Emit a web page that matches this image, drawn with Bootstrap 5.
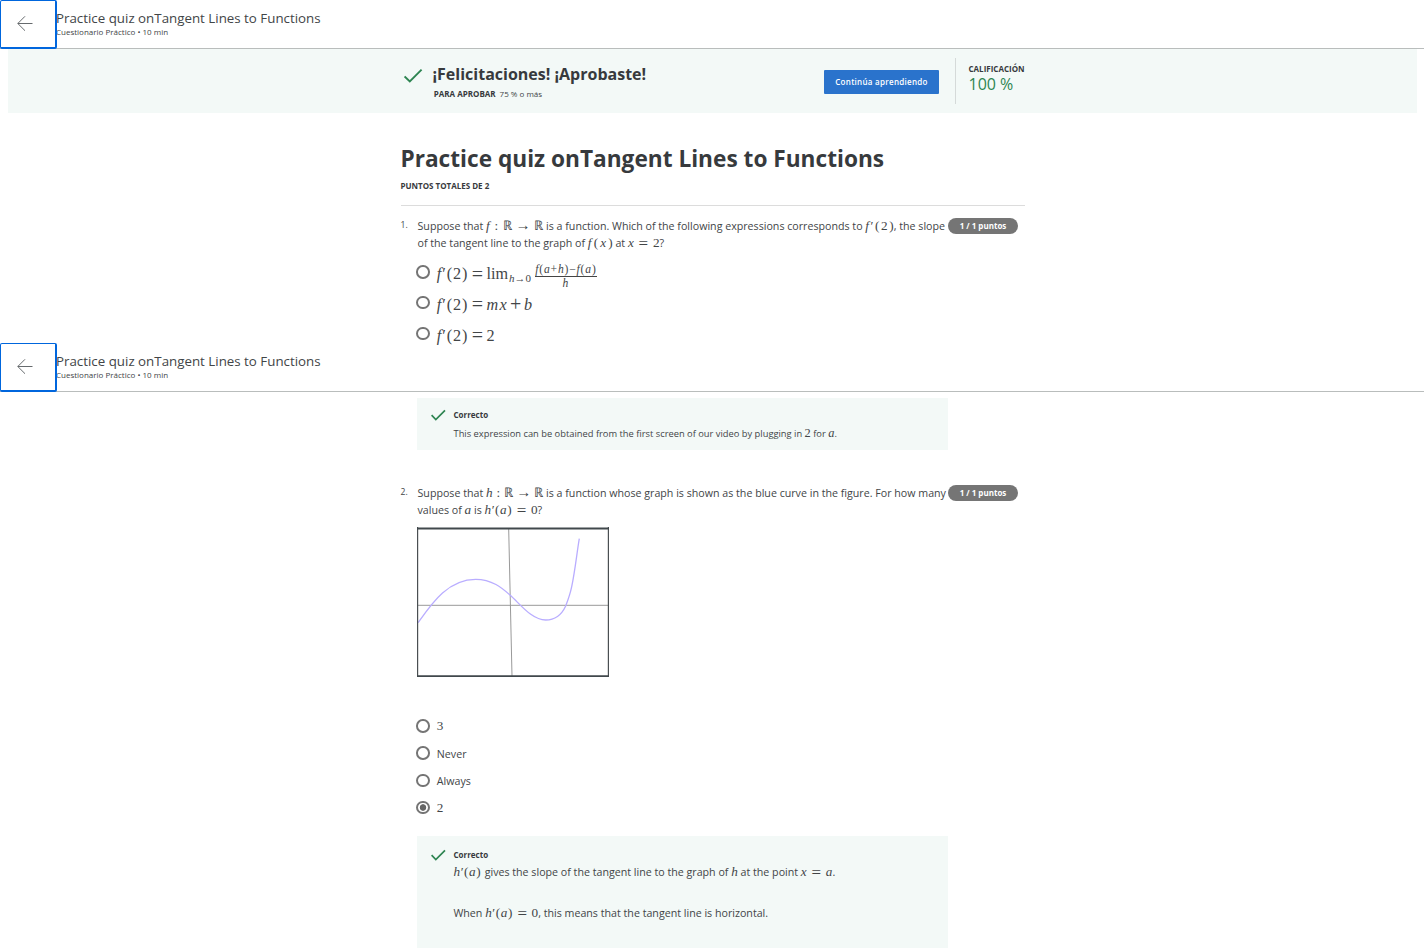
<!DOCTYPE html>
<html lang="es">
<head>
<meta charset="utf-8">
<title>Practice quiz on Tangent Lines to Functions</title>
<link href="https://cdn.jsdelivr.net/npm/bootstrap@5.3.0/dist/css/bootstrap.min.css" rel="stylesheet">
<style>
body{font-family:"Open Sans",sans-serif;font-size:10.667px;line-height:17px;color:#424547;height:948px;overflow:hidden;background:#fff}
h1,h2,strong,.total{color:#373a3d}
.quiz-bar{height:49px;border-bottom:1px solid #b9bdbc}
.back-btn{width:57px;height:49px;border:solid #0066dd;border-width:1px 2px 2px 1px;border-radius:2px;z-index:1;padding:0 0 0 16px}
.quiz-bar .titles{margin-left:-1px;padding-top:9px}
.bar-title{font-size:13.333px;line-height:18px;white-space:nowrap}
.bar-sub{font-size:8px;line-height:10px;white-space:nowrap}
.tiny{font-size:8px;line-height:12px}
.banner{height:64px;margin:0 7px 0 8px;background:#f3f9f7}
.column-main{width:624px;margin-left:401px}
.banner-in{width:624px;margin-left:393px}
.banner h2{font-size:16px;line-height:24px;padding-top:13px;margin-left:-.5px}
.banner .check{margin:19px 10px 0 3px}
.need{margin:2px 0 0 .8px}
.btn-go{width:115px;height:24px;line-height:22px;font-size:8px;border-radius:1px;letter-spacing:.28px;margin-top:21px;font-weight:600;background:#2a73cc;color:#fff}
.grade{height:46px;margin:9px 0 0 16px;border-left:1px solid #d5dad9;padding:5px 0 0 12.5px;width:70px}
.pct{font-size:16px;line-height:18px;color:#2e8552}
h1{font-size:22.667px;line-height:32px;padding-top:30px;margin-left:-.6px}
.total{padding-top:5px;height:30px;margin-left:-.5px}
.q1{border-top:1px solid #dcdcdc;padding-top:12px;height:138px}
.q2{margin-top:35px}
.num{width:17px;font-size:8.6px;line-height:14px;margin-left:-.5px}
.prompt{width:530.5px}
.pts{width:70px;height:16px;border-radius:8px;background:#757575;font-size:8px;line-height:16px;padding:0}
.mth{display:inline-flex;justify-content:space-between;font-family:"Liberation Serif",serif;font-size:13.2px;line-height:1;align-items:baseline}
.map{width:57.3px}
.fp{width:28.4px}
.fx{width:24.8px}
.xe{width:31.6px}
.hz{width:53px}
.call{letter-spacing:.55px}
.mth .eq{font-size:17px;line-height:10px;position:relative;top:1.5px}
.mth .to{font-size:15px;line-height:10px;margin:0 -1px}
.opt{align-items:flex-start;margin-left:16px}
.opt input{appearance:none;width:13.5px;height:13.5px;border:2px solid #757575;border-radius:50%;margin:0 7px 0 -.7px;flex:none;background:#fff}
.opt input:checked{background:radial-gradient(circle,#666 0 2.9px,#fff 3.6px)}
.opts1{padding-top:8px}
.opts1 .opt{height:30.8px}
.opts1 .opt input{margin-top:5px}
.opts1 .mth{font-size:16.2px;line-height:20px;padding-top:4px;gap:.9px}
.opts1 .rel{margin:0 2.6px 0 3.6px;font-size:20px;line-height:14px;position:relative;top:1.5px}
.opts1 .low{position:relative;top:3px;font-size:11px;margin-right:3px}
.opts1 .mx{letter-spacing:1.3px}
.opts1 .plus{margin:0 2px 0 1px;font-size:20px;line-height:14px;position:relative;top:1.5px}
.frac{position:relative;top:-6px;width:62px;font-size:11.6px;line-height:11px;letter-spacing:.8px}
.frac>span{border-bottom:1px solid #444;height:12.5px;white-space:nowrap;margin-bottom:1px}
.opts2{padding-top:42px}
.opts2 .opt{height:27.2px}
.opts2 .opt input{margin-top:.3px}
.opts2 .mth{line-height:14px}
.answer{background:#f3f9f7;width:531px;margin-left:16px;padding-left:14px}
.answer .txt{margin-left:7.5px}
.a1{height:52px;margin-top:6px;padding-top:11px}
.a2{height:112px;margin-top:8px;padding-top:13px}
.answer strong{margin-bottom:3.5px}
.small-txt{font-size:9.333px}
.small-txt .mth{font-size:12.4px}
.figure-graph{display:block;margin:8px 0 0 16px}
</style>
</head>
<body>
<header class="quiz-bar d-flex">
  <button class="back-btn bg-white position-relative d-flex align-items-center" aria-label="Atrás"><svg width="16" height="16" viewBox="0 0 16 16" fill="none" stroke="#666a6d"><path d="M15.5 7.5H.8M8 .3.8 7.5 8 14.7"/></svg></button>
  <div class="titles"><div class="bar-title">Practice quiz onTangent Lines to Functions</div><div class="bar-sub">Cuestionario Práctico • 10 min</div></div>
</header>
<section class="banner">
  <div class="banner-in d-flex align-items-start">
    <svg class="check" width="19" height="15" viewBox="0 0 19 15" fill="none" stroke="#2e8552" stroke-width="1.9"><path d="M.6 8.4 5.8 13.4 17.6 1.7"/></svg>
    <div class="flex-grow-1"><h2 class="fw-bold mb-0">¡Felicitaciones! ¡Aprobaste!</h2><div class="tiny need"><strong>PARA APROBAR</strong><span class="ms-1">75 % o más</span></div></div>
    <a class="btn btn-go p-0" href="#">Continúa aprendiendo</a>
    <div class="grade"><strong class="d-block tiny">CALIFICACIÓN</strong><div class="pct text-nowrap">100 %</div></div>
  </div>
</section>
<main class="column-main">
  <h1 class="fw-bold mb-0">Practice quiz onTangent Lines to Functions</h1>
  <div class="total tiny fw-bold">PUNTOS TOTALES DE 2</div>
  <section class="q1">
    <div class="d-flex">
      <div class="num">1.</div>
      <div class="prompt text-nowrap">Suppose that <span class="mth map"><i>f</i><span>:</span><span>ℝ</span><span class="to">→</span><span>ℝ</span></span> is a function. Which of the following expressions corresponds to <span class="mth fp"><i>f</i><span>′</span><span>(</span><span>2</span><span>)</span></span>, the slope<br>of the tangent line to the graph of <span class="mth fx"><i>f</i><span>(</span><i>x</i><span>)</span></span> at <span class="mth xe"><i>x</i><span class="eq">=</span><span>2</span></span>?</div>
      <span class="pts badge">1 / 1 puntos</span>
    </div>
    <div class="opts1">
      <label class="opt d-flex"><input type="radio" name="a"><span class="mth"><i>f</i><span>′</span><span>(</span><span>2</span><span>)</span><span class="rel">=</span><span>lim</span><span class="low"><i>h</i>→0</span><span class="frac d-inline-flex flex-column align-items-center"><span><i>f</i>(<i>a</i>+<i>h</i>)−<i>f</i>(<i>a</i>)</span><i>h</i></span></span></label>
      <label class="opt d-flex"><input type="radio" name="a"><span class="mth"><i>f</i><span>′</span><span>(</span><span>2</span><span>)</span><span class="rel">=</span><i class="mx">mx</i><span class="plus">+</span><i>b</i></span></label>
      <label class="opt d-flex"><input type="radio" name="a"><span class="mth"><i>f</i><span>′</span><span>(</span><span>2</span><span>)</span><span class="rel">=</span><span>2</span></span></label>
    </div>
  </section>
</main>
<header class="quiz-bar d-flex">
  <button class="back-btn bg-white position-relative d-flex align-items-center" aria-label="Atrás"><svg width="16" height="16" viewBox="0 0 16 16" fill="none" stroke="#666a6d"><path d="M15.5 7.5H.8M8 .3.8 7.5 8 14.7"/></svg></button>
  <div class="titles"><div class="bar-title">Practice quiz onTangent Lines to Functions</div><div class="bar-sub">Cuestionario Práctico • 10 min</div></div>
</header>
<div class="column-main">
  <div class="answer a1 d-flex align-items-start"><svg width="15" height="12" viewBox="0 0 15 12" fill="none" stroke="#2e8552" stroke-width="1.7"><path d="M.6 6.2 4.8 10.6 14 1.4"/></svg>
    <div class="txt text-nowrap"><strong class="tiny d-block">Correcto</strong><div class="small-txt">This expression can be obtained from the first screen of our video by plugging in <span class="mth">2</span> for <i class="mth">a</i>.</div></div></div>
  <section class="q2">
    <div class="d-flex">
      <div class="num">2.</div>
      <div class="prompt text-nowrap">Suppose that <span class="mth map"><i>h</i><span>:</span><span>ℝ</span><span class="to">→</span><span>ℝ</span></span> is a function whose graph is shown as the blue curve in the figure. For how many<br>values of <i class="mth">a</i> is <span class="mth hz"><span class="call"><i>h</i>′(<i>a</i>)</span><span class="eq">=</span><span>0</span></span>?</div>
      <span class="pts badge">1 / 1 puntos</span>
    </div>
    <svg class="figure-graph" width="192" height="150" viewBox="0 0 192 150" fill="none"><path stroke="#999" d="M1 78.3H191M91.7 2 95 149"/><path stroke="#b9adff" stroke-width="1.3" d="M1 95.7C15 76 31 52.3 58.7 52.3C75 52.3 85 61 93 68C104 78 115 93 128.7 93C138 93 145 87 148.7 79C151 73 153 68 154.7 59.7C158 44 160 25 162.3 11.7"/><path stroke="#4a4f52" stroke-width="1.2" d="M.6 0V150M191.4 0V150"/><path stroke="#41484c" stroke-width="2" d="M0 1.4H192M0 149.2H192"/></svg>
    <div class="opts2">
      <label class="opt d-flex"><input type="radio" name="b"><span class="mth">3</span></label>
      <label class="opt d-flex"><input type="radio" name="b"><span>Never</span></label>
      <label class="opt d-flex"><input type="radio" name="b"><span>Always</span></label>
      <label class="opt d-flex"><input type="radio" name="b" checked><span class="mth">2</span></label>
    </div>
  </section>
  <div class="answer a2 d-flex align-items-start"><svg width="15" height="12" viewBox="0 0 15 12" fill="none" stroke="#2e8552" stroke-width="1.7"><path d="M.6 6.2 4.8 10.6 14 1.4"/></svg>
    <div class="txt text-nowrap"><strong class="tiny d-block">Correcto</strong><p class="mb-4"><span class="mth fp"><span class="call"><i>h</i>′(<i>a</i>)</span></span> gives the slope of the tangent line to the graph of <i class="mth">h</i> at the point <span class="mth xe"><i>x</i><span class="eq">=</span><i>a</i></span>.</p><p class="mb-0">When <span class="mth hz"><span class="call"><i>h</i>′(<i>a</i>)</span><span class="eq">=</span><span>0</span></span>, this means that the tangent line is horizontal.</p></div></div>
</div>
<script src="https://cdn.jsdelivr.net/npm/bootstrap@5.3.0/dist/js/bootstrap.bundle.min.js"></script>
</body>
</html>
